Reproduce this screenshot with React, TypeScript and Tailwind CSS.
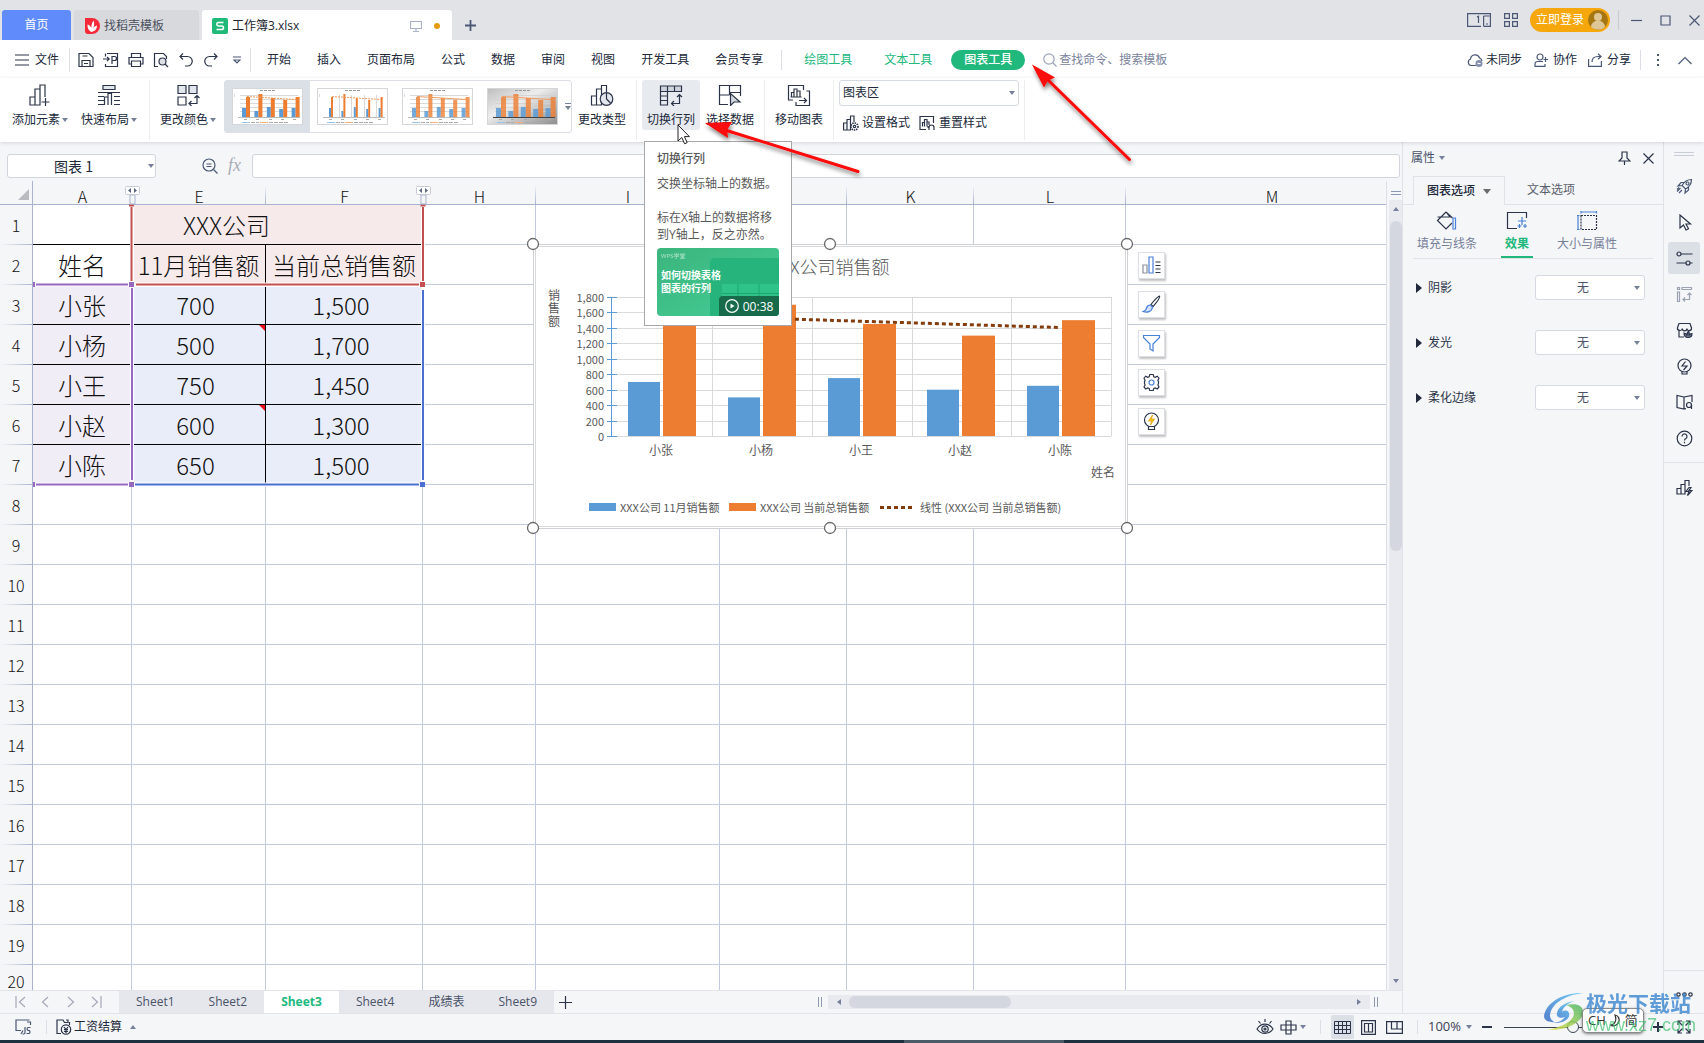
import type { ReactNode } from "react";

const INK = "#2b3448";
const SLATE = "#4a5775";

function Svg({
  w = 22,
  h = 22,
  stroke = INK,
  className = "",
  children,
}: {
  w?: number;
  h?: number;
  stroke?: string;
  className?: string;
  children: ReactNode;
}) {
  return (
    <svg
      width={w}
      height={h}
      viewBox={`0 0 ${w} ${h}`}
      fill="none"
      stroke={stroke}
      strokeWidth="1.2"
      className={`shrink-0 ${className}`}
      aria-hidden="true"
    >
      {children}
    </svg>
  );
}

function Caret({ className = "" }: { className?: string }) {
  return (
    <svg width="6" height="4" viewBox="0 0 6 4" className={`shrink-0 ${className}`} aria-hidden="true">
      <path d="M0 0h6L3 4z" fill="#76809a" />
    </svg>
  );
}

/* ---------- title bar ---------- */

function TitleBar() {
  return (
    <header className="flex h-10 shrink-0 items-end bg-[#e2e3e7] pl-0.5 text-xs">
      <button className="h-[30px] w-[69px] rounded-t-[3px] bg-[#5f8cfa] text-white">首页</button>
      <button className="ml-[3px] flex h-[30px] w-[125px] items-center rounded-t-[3px] bg-[#d8d9dc] pt-0.5 pl-2.5 text-[#4b5160]">
        <Svg w={16} h={16} stroke="none" className="mr-1">
          <path d="M1 0h7a8 8 0 0 1 0 16H4a3 3 0 0 1-3-3z" fill="#f5293a" />
          <path d="M7.500 14C4 12 3.500 9.500 3.500 6.500c2 .5 3.300 2 3.800 4C7.300 7.500 7.800 4.500 9.500 2.500c1.200 2.500.8 5.500-.6 8.300 1-1.800 2.300-2.800 4.100-3.200 0 3-1.700 5.900-5.500 6.400z" fill="#fff" />
        </Svg>
        找稻壳模板
      </button>
      <div className="ml-[3px] flex h-[30px] w-[250px] items-center rounded-t-[3px] bg-white pt-0.5 pl-2.5 text-[#20242e]">
        <Svg w={16} h={16} stroke="#fff" className="mr-1">
          <rect width="16" height="16" rx="2" fill="#1fb97a" stroke="none" />
          <path d="M11.500 4.500H6.500a1.600 1.600 0 0 0 0 3.400h3.200a1.800 1.800 0 0 1 0 3.600H4.500" strokeWidth="1.500" />
        </Svg>
        工作簿3.xlsx
        <Svg w={12} h={12} stroke="#aab2c5" className="mr-3 ml-auto">
          <path d="M.5 1.500h11v7H.5zM6 8.500v3M3 11.500h6" />
        </Svg>
        <span className="mr-3 size-1.5 rounded-full bg-[#e59b0c]" />
      </div>
      <button className="mb-2 ml-3 flex size-[13px]" aria-label="新建标签">
        <Svg w={13} h={13} stroke={SLATE}>
          <path d="M6.500 1v11M1 6.500h11" strokeWidth="1.800" />
        </Svg>
      </button>

      <div className="ml-auto flex h-10 items-center pr-1">
        <Svg w={24} h={14} stroke={SLATE} className="mr-[13px]">
          <path d="M14 13.400H.6V.6h22.800v12.800H17M10 4l1.500-.7V10M16.600 3v10.500M16.600 3h6" />
          <path d="M19 11h2" />
        </Svg>
        <Svg w={14} h={14} stroke={SLATE} className="mr-3">
          <path d="M.6.600h4.800v4.800H.6zM8.600.600h4.800v4.800H8.600zM.6 8.600h4.800v4.800H.6zM8.600 8.600h4.800v4.800H8.600z" />
        </Svg>
        <button className="flex h-6 w-20 items-center justify-between rounded-full bg-[#f6a70c] pr-0.5 pl-1.5 text-white">
          立即登录
          <Svg w={20} h={20} stroke="none">
            <circle cx="10" cy="10" r="10" fill="#a67612" />
            <circle cx="10" cy="7" r="4" fill="#dfc695" />
            <path d="M3 17a7 6.500 0 0 1 14 0 10 10 0 0 1-14 0z" fill="#dfc695" />
          </Svg>
        </button>
        <span className="mr-3 ml-2 h-5 w-px bg-[#c8cad0]" />
        <button aria-label="最小化" className="mr-[18px]">
          <Svg w={11} h={11} stroke={SLATE}>
            <path d="M0 5.500h11" />
          </Svg>
        </button>
        <button aria-label="最大化" className="mr-[18px]">
          <Svg w={11} h={11} stroke={SLATE}>
            <path d="M1 1h9v9H1z" />
          </Svg>
        </button>
        <button aria-label="关闭">
          <Svg w={11} h={11} stroke={SLATE}>
            <path d="M.5.500l10 10M10.500.500l-10 10" />
          </Svg>
        </button>
      </div>
    </header>
  );
}

/* ---------- menu row ---------- */

const quickTools: { label: string; icon: ReactNode }[] = [
  {
    label: "保存",
    icon: <path d="M1 1.500h10l4 4v9H1zM4 14.500v-6h8v6M6 11.500h4M4.500 4h5" />,
  },
  {
    label: "输出为PDF",
    icon: <path d="M4 1.500h10.500v13H2.500V12M2.500 4.500V1.500M0 7h6M4 4.800L6.200 7 4 9.200M9 12V4.500h2.500a2 2 0 0 1 0 4H9" />,
  },
  {
    label: "打印",
    icon: <path d="M3.500 5V1.500h9V5M3.500 12H1V5.500h14V12h-2.500M3.500 9h9v5.500h-9z" />,
  },
  {
    label: "打印预览",
    icon: (
      <>
        <path d="M5 14.500H1.500v-13h9l3 3V7" />
        <circle cx="9.500" cy="9.500" r="3.500" fill="#dde0e6" />
        <path d="M12 12l3 3" />
      </>
    ),
  },
  { label: "撤销", icon: <path d="M5 1.500L2 4.500l3 3M2 4.500h7.500a4.500 4.500 0 0 1 0 9.500H7" /> },
  { label: "恢复", icon: <path d="M11 1.500l3 3-3 3M14 4.500H6.500a4.500 4.500 0 0 0 0 9.500H9" /> },
];

const menus = ["开始", "插入", "页面布局", "公式", "数据", "审阅", "视图", "开发工具", "会员专享"];

function MenuRow() {
  return (
    <nav className="flex h-[38px] shrink-0 items-center bg-white pt-0.5 pl-[15px] text-xs text-[#20283a]">
      <button className="flex items-center gap-1.5">
        <Svg w={14} h={12}>
          <path d="M0 1h14M0 6h14M0 11h14" />
        </Svg>
        文件
      </button>
      <span className="mr-2 ml-2.5 h-6 w-px bg-[#dcdfe6]" />
      <div className="flex gap-[9px]">
        {quickTools.map((tool) => (
          <button key={tool.label} aria-label={tool.label}>
            <Svg w={16} h={16}>{tool.icon}</Svg>
          </button>
        ))}
      </div>
      <button className="ml-3.5" aria-label="自定义快速访问">
        <Svg w={8} h={8} stroke={SLATE}>
          <path d="M0 1h8M1 4l3 3 3-3z" />
        </Svg>
      </button>
      <span className="ml-[9px] h-6 w-px bg-[#dcdfe6]" />
      <div className="ml-4 flex gap-[26px]">
        {menus.map((m) => (
          <button key={m}>{m}</button>
        ))}
      </div>
      <span className="ml-[18px] h-5 w-px bg-[#dcdfe6]" />
      <button className="ml-[22px] text-[#20b87c]">绘图工具</button>
      <button className="ml-8 text-[#20b87c]">文本工具</button>
      <button className="ml-[19px] h-5 w-[74px] rounded-full bg-[#20b87c] font-medium text-white">图表工具</button>
      <label className="ml-[18px] flex items-center gap-0.5 text-[#7a839c]">
        <Svg w={14} h={14} stroke="#9aa3b8">
          <circle cx="6" cy="6" r="5.200" />
          <path d="M10 10l3.500 3.500" />
        </Svg>
        <input
          aria-label="查找命令"
          className="w-28 bg-transparent outline-none placeholder:text-[#7a839c]"
          placeholder="查找命令、搜索模板"
        />
      </label>

      <div className="ml-auto flex items-center pr-3">
        <button className="mr-3 flex items-center gap-[3px]">
          <Svg w={16} h={14} stroke={SLATE}>
            <path d="M9 12.500H4A3.400 3.400 0 0 1 3.500 6 4.700 4.700 0 0 1 12.600 5 3.800 3.800 0 0 1 15 8" />
            <circle cx="12" cy="10.500" r="3.500" fill="#8391af" stroke="none" />
            <path d="M10.500 10.500h3" stroke="#fff" />
          </Svg>
          未同步
        </button>
        <button className="mr-[11px] flex items-center gap-[5px]">
          <Svg w={14} h={14} stroke={SLATE}>
            <circle cx="6" cy="4" r="3" />
            <path d="M9 8.500H3.500A2.500 2.500 0 0 0 1 11v2.400h10V11M11.500 4v5M9.500 6.500H14" />
          </Svg>
          协作
        </button>
        <button className="mr-[9px] flex items-center gap-[5px]">
          <Svg w={14} h={14} stroke={SLATE}>
            <path d="M.6 6v7.400h12.800V8M4 9c0-3.500 2-5.500 6-5.500h2.500M10 .8l3 2.700-3 2.700" />
          </Svg>
          分享
        </button>
        <span className="mr-4 h-5 w-px bg-[#dcdfe6]" />
        <button aria-label="更多" className="mr-[18px]">
          <Svg w={3} h={13} stroke="none">
            <path d="M0 0h2v2H0zM0 5h2v2H0zM0 10h2v2H0z" fill={SLATE} />
          </Svg>
        </button>
        <button aria-label="收起功能区">
          <Svg w={14} h={9} stroke={SLATE}>
            <path d="M.5 8L7 1.500 13.500 8" />
          </Svg>
        </button>
      </div>
    </nav>
  );
}

/* ---------- ribbon ---------- */

function RibbonButton({ label, caret, icon }: { label: string; caret?: boolean; icon: ReactNode }) {
  return (
    <button className="flex shrink-0 flex-col items-center gap-1.5 pt-1">
      <Svg w={24} h={22}>{icon}</Svg>
      <span className="flex items-center gap-0.5 leading-4">
        {label}
        {caret && <Caret />}
      </span>
    </button>
  );
}

function RibbonLine({ className }: { className: string }) {
  return <span className={`h-[60px] w-px shrink-0 bg-[#eceef2] ${className}`} />;
}

const thumbs = [
  { bw: 4, dark: false, dashed: true, faint: false },
  { bw: 2, dark: false, dashed: true, faint: false },
  { bw: 4, dark: false, dashed: false, faint: true },
  { bw: 5, dark: true, dashed: false, faint: true },
];
const thumbData = [
  [9, 20],
  [6, 23],
  [10, 19],
  [8, 17],
  [9, 20],
];

function Thumb({ bw, dark, dashed, faint }: (typeof thumbs)[0]) {
  return (
    <svg width="71" height="37" viewBox="0 0 71 37" aria-hidden="true">
      <defs>
        <linearGradient id="thumbDark" x1="0" y1="0" x2="1" y2="1">
          <stop offset="0" stopColor="#bdbdbd" />
          <stop offset=".4" stopColor="#ededed" />
          <stop offset="1" stopColor="#8c8c8c" />
        </linearGradient>
      </defs>
      <rect x=".5" y=".5" width="70" height="36" fill={dark ? "url(#thumbDark)" : "#fff"} stroke="#d4d6da" />
      <path d="M28 2.500h16" stroke="#999" strokeDasharray="3 1" />
      {bw === 2 ? (
        <path d="M22.500 7v22M34.500 7v22M47.500 7v22M59.500 7v22M2.500 6v3" stroke="#cfcfcf" strokeWidth=".8" />
      ) : (
        <path d="M8 7.500h58M8 11.500h58M8 15.500h58M8 19.500h58M8 23.500h58M2.500 6v3" stroke="#d0d0d0" strokeWidth=".8" />
      )}
      <path d="M6 29.500h62" stroke={dark ? "#444" : "#bbb"} />
      {thumbData.map(([a, b], i) => (
        <g key={i}>
          <rect x={14 + i * 12.4 - bw} y={29 - a} width={bw} height={a} fill="#5b9bd5" opacity={faint ? 0.85 : 1} />
          <rect x={14 + i * 12.4} y={29 - b} width={bw} height={b} fill="#ed7d31" opacity={faint ? 0.8 : 1} />
        </g>
      ))}
      <path d="M15 8.500l49 3" stroke="#f09a5e" strokeDasharray={dashed ? "2 1" : "none"} />
      <path d="M12 31.500h3M24 31.500h3M37 31.500h3M49 31.500h3M61 31.500h3" stroke="#aaa" />
      <path d="M10 34.500h8" stroke="#9cc3e8" />
      <path d="M28 34.500h8" stroke="#f3b07f" />
      <path d="M19 34.500h8M37 34.500h20" stroke="#aaa" strokeDasharray="4 1" />
    </svg>
  );
}

function SwitchTooltip() {
  return (
    <div
      id="switch-tip"
      role="tooltip"
      className="absolute top-[61px] left-[2px] z-30 w-[148px] border border-[#a8a8a8] bg-white px-3 pt-2 pb-[9px] text-left text-xs leading-[17px] text-[#595959]"
    >
      <p className="font-medium">切换行列</p>
      <p className="mt-2">交换坐标轴上的数据。</p>
      <p className="mt-[17px]">标在X轴上的数据将移到Y轴上，反之亦然。</p>
      <div className="relative mt-[5px] h-[68px] overflow-hidden rounded-[4px] bg-linear-to-br from-[#3bb57d] to-[#45cd97] px-1 pt-1 text-white">
        <svg width="69" height="58" viewBox="0 0 69 58" fill="none" className="absolute right-0 bottom-0" aria-hidden="true">
          <path d="M0 58V5a5 5 0 0 1 5-5h64v58z" fill="#27b47c" />
          <path d="M12 26h57v32H12z" fill="#2fc389" />
          <path d="M12 35.500h57M28 26v32M49 26v32" stroke="#1da66c" />
        </svg>
        <p className="relative text-[6px] leading-2 opacity-60">WPS学堂</p>
        <p className="relative mt-[9px] text-[10px] leading-[13px] font-bold">
          如何切换表格
          <br />
          图表的行列
        </p>
        <span className="absolute right-0 bottom-0 flex h-5 w-[60px] items-center justify-center gap-1 rounded-tl-[4px] bg-[#176b4b]">
          <Svg w={14} h={14} stroke="#fff">
            <circle cx="7" cy="7" r="6.300" />
            <path d="M5.500 4.500v5l4-2.500z" fill="#fff" stroke="none" />
          </Svg>
          00:38
        </span>
      </div>
    </div>
  );
}

function Ribbon() {
  return (
    <section className="relative z-20 flex h-16 shrink-0 bg-white pt-0.5 pl-3 text-xs text-[#20283a] shadow-[0_1px_4px_rgba(40,50,70,0.16)]">
      <RibbonButton
        label="添加元素"
        caret
        icon={<path d="M2 21V13h5v8zM7 13V5h5v16H7M12 5V1h5v12M12 20.500V16M17.500 14v8M13.500 18h8" />}
      />
      <span className="w-[13px]" />
      <RibbonButton
        label="快速布局"
        caret
        icon={
          <>
            <path d="M6 1.500h12v4H6z" fill="#e3e6ec" />
            <path d="M1 8.500h22M1 12.500h6M1 16.500h6M1 20.500h6M17 12.500h6M17 16.500h6M17 20.500h6M7.500 21v-8h3.500v8M11 21V9.500h3.500V21" />
          </>
        }
      />
      <RibbonLine className="mr-2.5 ml-3" />
      <RibbonButton
        label="更改颜色"
        caret
        icon={
          <>
            <path d="M2 1.500h8v8H2zM13 1.500h8v8h-8z" fill="#e3e6ec" />
            <path d="M2 13h8v8H2zM21 12v7.500h-8M15.500 17L13 19.500l2.500 2.500M18.500 14L21 11.500l2.500 2.500" />
          </>
        }
      />
      <div className="ml-2 flex h-[53px] w-[348px] shrink-0 rounded-[3px] border border-[#dcdfe6]">
        {thumbs.map((t, i) => (
          <button
            key={i}
            aria-label={`图表样式 ${i + 1}`}
            className={`flex w-[85px] shrink-0 items-center pl-[7px] ${i === 0 ? "bg-[#dbe0e6]" : ""}`}
          >
            <Thumb {...t} />
          </button>
        ))}
        <button aria-label="更多样式" className="flex min-w-0 flex-1 items-center justify-center">
          <Svg w={6} h={8} stroke="none">
            <path d="M0 0h6v1H0zM0 3h6L3 7z" fill="#76809a" />
          </Svg>
        </button>
      </div>
      <span className="w-1.5" />
      <RibbonButton
        label="更改类型"
        icon={
          <>
            <path d="M1.500 21v-9h5v9zM6.500 12V5h5v16h-5M11.500 6V1.500h5V8" />
            <circle cx="16.500" cy="15" r="6.300" fill="#e3e6ec" />
            <path d="M16.500 9v6l4 4" />
          </>
        }
      />
      <RibbonLine className="mr-[5px] ml-2.5" />
      <div className="relative">
        <button
          aria-describedby="switch-tip"
          className="flex h-[50px] w-[58px] flex-col items-center gap-1.5 rounded-[3px] bg-[#e7eaef] pt-1"
        >
          <Svg w={24} h={22}>
            <path d="M1.500 2h21v5.500h-21z" fill="#cfd4dc" />
            <path d="M1.500 7.500V21h7V2M15.500 2v5.500M1.500 12h7M1.500 16.500h7M20.500 11v8.500h-8M15 17l-2.500 2.500L15 22M18 13l2.500-2.500L23 13" />
          </Svg>
          <span className="leading-4">切换行列</span>
        </button>
        <SwitchTooltip />
      </div>
      <span className="w-1.5" />
      <RibbonButton
        label="选择数据"
        icon={
          <>
            <path d="M10 20.500H1.500v-19h21V12M1.500 11h10M11.500 1.500V11M11.500 8.500h11" />
            <path d="M12.500 9.500v12l3.500-3.500h6z" fill="#d5d9e1" />
          </>
        }
      />
      <RibbonLine className="mr-2.5 ml-2.5" />
      <RibbonButton
        label="移动图表"
        icon={
          <path d="M6 16H1.500V1.500h15V6M19.500 7h3v14.500H9V18M4.500 13V8.500h2.500V13M7 13V5h3v8M10 13V7h3v6M3.500 13h11M12 16.500h7M17 14l2.500 2.500L17 19" />
        }
      />
      <RibbonLine className="mr-[5px] ml-2.5" />
      <div className="w-[180px] shrink-0">
        <div className="relative">
          <select
            aria-label="图表元素"
            className="h-[26px] w-full appearance-none rounded-[3px] border border-[#d5d9e1] bg-white pl-[3px] outline-none"
          >
            <option>图表区</option>
          </select>
          <Caret className="absolute top-[11px] right-1" />
        </div>
        <div className="mt-[9px] flex items-center gap-[9px] pl-1 leading-4">
          <button className="flex items-center gap-[3px]">
            <Svg w={16} h={16}>
              <path d="M.6 15V8H4v7zM4 8V4.500h3.500V15H4M7.500 4.500V1H11v6" />
              <circle cx="11.500" cy="11.500" r="3.500" strokeDasharray="1.500 .8" strokeWidth="1.600" />
              <circle cx="11.500" cy="11.500" r="1.200" />
            </Svg>
            设置格式
          </button>
          <button className="flex items-center gap-1">
            <Svg w={16} h={16}>
              <path d="M7 14.500H1V1.500h13.500V8M3.500 11.500V7.500h2v4M5.500 11.500v-7h2.500v7M8 7h2v3M10 15v-2.500a2.500 2.500 0 0 1 5 0V15M8.500 11.500L10 13" />
            </Svg>
            重置样式
          </button>
        </div>
      </div>
      <RibbonLine className="ml-[5px]" />
    </section>
  );
}

/* ---------- spreadsheet ---------- */

const columns = [
  { name: "A", width: "w-[99px]" },
  { name: "E", width: "w-[134px]" },
  { name: "F", width: "w-[157px]" },
  { name: "H", width: "w-[113px]" },
  { name: "I", width: "w-[184px]" },
  { name: "J", width: "w-[127px]" },
  { name: "K", width: "w-[127px]" },
  { name: "L", width: "w-[152px]" },
  { name: "M", width: "w-[292px]" },
];

const people = [
  { name: "小张", month: 700, total: "1,500", note: false },
  { name: "小杨", month: 500, total: "1,700", note: true },
  { name: "小王", month: 750, total: "1,450", note: false },
  { name: "小赵", month: 600, total: "1,300", note: true },
  { name: "小陈", month: 650, total: "1,500", note: false },
];

const LAST_ROW = 20;
const GRID = "border-r border-b border-[#c3cadf]";
const INKED = "border-b border-b-black";

function RowHead({ n }: { n: number }) {
  return (
    <th
      scope="row"
      className={`border-r border-[#a9b3cf] bg-[#f5f6f8] bg-[linear-gradient(to_right,transparent,#a9b3cf)] bg-[length:100%_1px] bg-bottom bg-no-repeat p-0 text-base leading-4 font-light ${
        n === LAST_ROW ? "h-8" : "h-10"
      }`}
    >
      {n}
    </th>
  );
}

function EmptyCells({ count }: { count: number }) {
  return (
    <>
      {Array.from({ length: count }, (_, i) => (
        <td key={i} className={GRID} />
      ))}
    </>
  );
}

function Sheet() {
  return (
    <table className="w-[1418px] min-w-full table-fixed border-separate border-spacing-0 bg-white text-center text-base text-[#111] [font-family:'Noto_Sans_CJK_SC',sans-serif]">
      <colgroup>
        <col className="w-[33px]" />
        {columns.map((c) => (
          <col key={c.name} className={c.width} />
        ))}
      </colgroup>
      <thead>
        <tr>
          <th className="h-6 border-r border-b border-[#a9b3cf] bg-[#f5f6f8] p-0">
            <svg width="11" height="11" viewBox="0 0 11 11" className="mt-1 mr-[3px] ml-auto" aria-hidden="true">
              <path d="M11 0v11H0z" fill="#b9bbc0" />
            </svg>
          </th>
          {columns.map((c) => (
            <th
              key={c.name}
              scope="col"
              className="h-6 border-b border-[#a9b3cf] bg-[#f5f6f8] bg-[linear-gradient(to_bottom,transparent,#a9b3cf)] bg-[length:1px_19px] bg-right-bottom bg-no-repeat p-0 align-bottom leading-4 font-light"
            >
              {c.name}
            </th>
          ))}
        </tr>
      </thead>
      <tbody>
        <tr>
          <RowHead n={1} />
          <td className={`border-r border-[#c3cadf] ${INKED}`} />
          <td
            colSpan={2}
            className={`border-r border-[#c3cadf] bg-[#f7eaea] p-0 pl-[51px] text-left text-2xl font-light ${INKED}`}
          >
            XXX公司
          </td>
          <EmptyCells count={6} />
        </tr>
        <tr className="text-2xl leading-8 whitespace-nowrap">
          <RowHead n={2} />
          <td className={`border-r border-[#c3cadf] p-0 font-light ${INKED}`}>姓名</td>
          <td className={`border-r border-r-black bg-[#f7eaea] p-0 font-light ${INKED}`}>11月销售额</td>
          <td className={`border-r border-[#c3cadf] bg-[#f7eaea] p-0 font-light ${INKED}`}>当前总销售额</td>
          <EmptyCells count={6} />
        </tr>
        {people.map((p, i) => (
          <tr key={p.name}>
            <RowHead n={i + 3} />
            <td className={`border-r border-[#c3cadf] bg-[#f1edf7] p-0 text-2xl font-light ${INKED}`}>{p.name}</td>
            <td className={`relative border-r border-r-black bg-[#e9edf9] p-0 pr-1.5 text-2xl font-light ${INKED}`}>
              {p.month}
              {p.note && (
                <svg width="6" height="6" viewBox="0 0 6 6" className="absolute top-0 right-0" aria-hidden="true">
                  <path d="M0 0h6v6z" fill="#f0101c" />
                </svg>
              )}
            </td>
            <td className={`border-r border-[#c3cadf] bg-[#e9edf9] p-0 pr-1.5 text-2xl font-light ${INKED}`}>{p.total}</td>
            <EmptyCells count={6} />
          </tr>
        ))}
        {Array.from({ length: LAST_ROW - 7 }, (_, i) => (
          <tr key={i}>
            <RowHead n={i + 8} />
            <EmptyCells count={9} />
          </tr>
        ))}
      </tbody>
    </table>
  );
}

// coloured outlines of the ranges that feed the chart
function RangeOutlines() {
  return (
    <svg width="440" height="310" viewBox="0 185 440 310" fill="none" className="absolute top-1 left-0" aria-hidden="true">
      <g stroke="#fff" strokeWidth="4">
        <path d="M132 205v80h291v-80M34 284.500h98v200H34M132 284.500h291v200H132" />
      </g>
      <g strokeWidth="2">
        <path d="M423 290v190M135 484.500h284" stroke="#4a6fd0" />
        <path d="M131.500 207v74M423 207v74M136 284.500h283" stroke="#c1504f" />
        <path d="M36 284.500h92M132 288v192M36 484.500h92" stroke="#9668c0" />
      </g>
      <path d="M129 204.500h5v2h-5zM420.500 204.500h5v2h-5zM420 282h5v5h-5z" fill="#c1504f" />
      <path d="M129 282h5v5h-5zM129 482h5v5h-5zM33 282h2v5h-2zM33 482h2v5h-2z" fill="#9668c0" />
      <path d="M420 482h5v5h-5z" fill="#4a6fd0" />
    </svg>
  );
}

function HiddenColumns({ className }: { className: string }) {
  return (
    <svg width="15" height="20" viewBox="0 0 15 20" className={`absolute top-1 ${className}`} aria-hidden="true">
      <path d="M5 10v9h5v-9z" fill="#f5f6f8" stroke="#a9b3cf" />
      <rect x=".5" y="1.500" width="14" height="8" rx="1" fill="#fff" stroke="#c8ccd6" />
      <path d="M6 3v5L3 5.500zM9 3v5l3-2.500z" fill="#5b6782" />
    </svg>
  );
}

/* ---------- chart ---------- */

const PLOT = { left: 612, right: 1111, top: 297, bottom: 436 };
const barY = (v: number) => PLOT.bottom - (v * (PLOT.bottom - PLOT.top)) / 1800;
const slot = (PLOT.right - PLOT.left) / 5;
const ticks = Array.from({ length: 10 }, (_, i) => i * 200);

function Chart() {
  return (
    <svg
      width="612"
      height="304"
      viewBox="525 235 612 304"
      className="absolute top-[54px] left-[525px] [font-family:'Noto_Sans_CJK_SC',sans-serif]"
      fontSize="12"
      fill="#595959"
      role="img"
      aria-label="XXX公司销售额"
    >
      <rect x="533.500" y="244.500" width="594" height="284" fill="#fff" stroke="#cfd1d6" />
      <rect x="535.500" y="246.500" width="590" height="280" fill="#fff" stroke="#d9d9d9" />
      <text x="830" y="274" fontSize="18" textAnchor="middle" fontWeight="300">XXX公司销售额</text>
      {["销", "售", "额"].map((c, i) => (
        <text key={c} x="548" y={300 + i * 13}>{c}</text>
      ))}
      {ticks.map((t) => (
        <g key={t}>
          <path d={`M${PLOT.left} ${Math.round(barY(t)) + 0.5}H${PLOT.right}`} stroke="#d9d9d9" />
          <path d={`M607 ${Math.round(barY(t)) + 0.5}h10`} stroke="#5b9bd5" />
          <text x="604" y={Math.round(barY(t)) + 5} fontSize="11" textAnchor="end">
            {t.toLocaleString("en-US")}
          </text>
        </g>
      ))}
      {people.map((p, i) => {
        const x = Math.round(PLOT.left + i * slot);
        const total = Number(p.total.replace(",", ""));
        return (
          <g key={p.name}>
            <path d={`M${Math.round(x + slot)}.5 ${PLOT.top}V${PLOT.bottom}`} stroke="#d9d9d9" />
            <rect x={x + 16} y={barY(p.month)} width="32" height={PLOT.bottom - barY(p.month)} fill="#5b9bd5" />
            <rect x={x + 51} y={barY(total)} width="33" height={PLOT.bottom - barY(total)} fill="#ed7d31" />
            <text x={x + 49} y="455" textAnchor="middle">{p.name}</text>
          </g>
        );
      })}
      <path d={`M611.500 ${PLOT.top}V${PLOT.bottom}`} stroke="#5b9bd5" />
      <path d="M662 315l397 12.500" stroke="#843c0c" strokeWidth="3" strokeDasharray="4 3" />
      <text x="1091" y="477">姓名</text>
      <rect x="589" y="503" width="27" height="8" fill="#5b9bd5" />
      <text x="620" y="512" fontSize="11">XXX公司 11月销售额</text>
      <rect x="729" y="503" width="27" height="8" fill="#ed7d31" />
      <text x="760" y="512" fontSize="11">XXX公司 当前总销售额</text>
      <path d="M880 507.500h35" stroke="#843c0c" strokeWidth="3" strokeDasharray="4 3" />
      <text x="920" y="512" fontSize="11">线性 (XXX公司 当前总销售额)</text>
      {[533, 830, 1127].map((x) =>
        [244, 528].map((y) => (
          <circle key={`${x}-${y}`} cx={x} cy={y} r="5.500" fill="#fff" stroke="#6b6b6b" strokeWidth="1.300" />
        )),
      )}
    </svg>
  );
}

const chartTools: { label: string; icon: ReactNode }[] = [
  {
    label: "图表元素",
    icon: (
      <>
        <path d="M1 9h4v8H1z" stroke="#8a8f9c" />
        <path d="M7 1h4v16H7z" stroke="#4a80d8" />
        <path d="M13.500 6h5M13.500 9.500h5M13.500 13h5M13.500 16.500h5" />
      </>
    ),
  },
  {
    label: "图表样式",
    icon: (
      <>
        <path d="M17.500 1c-1 0-6 5-8.500 8.500l2 2C14 8 18.500 3 17.500 1z" />
        <path d="M8.500 10c-2 0-3.500 1-4 3-.3 1.600-1.500 3-3.500 3.500 4 1.300 9 .5 9.500-4.500z" fill="#cfe0f8" stroke="#4a80d8" />
      </>
    ),
  },
  {
    label: "图表筛选器",
    icon: <path d="M1.500 1.500h16v2L11 10v7l-3-2v-5L1.500 3.500z" stroke="#4a80d8" />,
  },
  {
    label: "设置图表区域格式",
    icon: (
      <>
        <path d="M7.800 1.500h3.400l.6 2.200 1.500.6 2-1.100 1.700 2-1.100 2 .6 1.500v1.800l-.6 1.500 1.100 2-1.700 2-2-1.100-1.500.6-.6 2H7.800l-.6-2-1.500-.6-2 1.100-1.700-2 1.100-2-.6-1.500V8.700l.6-1.500-1.100-2 1.700-2 2 1.100 1.500-.6z" />
        <circle cx="9.500" cy="9.500" r="2.500" stroke="#4a80d8" />
      </>
    ),
  },
  {
    label: "智能推荐",
    icon: (
      <>
        <circle cx="9.500" cy="8" r="7" />
        <path d="M6.500 14.500h6v3h-6z" fill="#fff" />
        <path d="M10.500 3L6.500 9h3l-1 4 4-6h-3z" fill="#f8c21c" stroke="#e5a20c" strokeWidth=".8" />
      </>
    ),
  },
];

function ChartTools() {
  return (
    <div className="absolute top-[71px] left-[1138px] flex flex-col gap-3">
      {chartTools.map((t) => (
        <button
          key={t.label}
          aria-label={t.label}
          className="flex size-[27px] items-center justify-center border border-[#dcdfe6] bg-white shadow-[1px_2px_2px_rgba(0,0,0,0.25)]"
        >
          <Svg w={19} h={19}>{t.icon}</Svg>
        </button>
      ))}
    </div>
  );
}

function FormulaBar() {
  return (
    <div className="flex h-[39px] items-start pt-3 pr-0.5 pl-[7px]">
      <div className="relative">
        <input
          aria-label="名称框"
          defaultValue="图表 1"
          className="h-6 w-[149px] rounded-[3px] border border-[#d2d5dc] bg-white pr-4 text-center text-sm text-[#20283a] outline-none [font-family:'Noto_Sans_CJK_SC',sans-serif]"
        />
        <Caret className="absolute top-2.5 right-0.5" />
      </div>
      <button aria-label="浏览公式结果" className="mt-1 ml-[46px]">
        <Svg w={16} h={16} stroke={SLATE}>
          <circle cx="7" cy="7" r="6" />
          <path d="M11.500 11.500l4 4M4.500 6h5M4.500 8.500h5" />
        </Svg>
      </button>
      <span className="ml-2.5 w-6 text-lg leading-[22px] text-[#a9adb6] italic [font-family:'Liberation_Serif',serif]">fx</span>
      <input aria-label="编辑栏" className="h-6 min-w-0 flex-1 rounded-[3px] border border-[#d2d5dc] bg-white px-2 outline-none" />
    </div>
  );
}

function VerticalScroll() {
  return (
    <div className="flex w-4 shrink-0 flex-col border-l border-[#dcdfe8] pt-1 pl-0.5">
      <div className="flex h-[15px] flex-col items-center justify-center gap-0.5">
        <span className="h-px w-2.5 bg-[#8d98b3]" />
        <span className="h-px w-2.5 bg-[#8d98b3]" />
      </div>
      <div className="flex flex-1 flex-col items-center bg-[#e9eaef] py-[7px]">
        <Caret className="rotate-180" />
        <span className="mt-2.5 h-[330px] w-3 rounded-full bg-[#d4d7df]" />
        <Caret className="mt-auto" />
      </div>
    </div>
  );
}

const sheetTabs = ["Sheet1", "Sheet2", "Sheet3", "Sheet4", "成绩表", "Sheet9"];

const sheetArrows = [
  { label: "第一张", d: "M1 0v12M10 1L4.500 6l5.500 5" },
  { label: "上一张", d: "M8 1L2.500 6 8 11" },
  { label: "下一张", d: "M2 1l5.500 5L2 11" },
  { label: "最后一张", d: "M1 1l5.500 5L1 11M10 0v12" },
];

function SheetTabs() {
  return (
    <div className="flex h-[23px] shrink-0 items-center border-t border-[#e2e4ea] text-xs text-[#4a5368]">
      <div className="flex w-[119px] shrink-0 items-center justify-between pr-[17px] pl-[15px]">
        {sheetArrows.map((a) => (
          <button key={a.label} aria-label={a.label}>
            <Svg w={11} h={12} stroke="#a3a9b7">
              <path d={a.d} />
            </Svg>
          </button>
        ))}
      </div>
      {sheetTabs.map((s) => (
        <button
          key={s}
          className={`h-full shrink-0 px-[17px] ${s === "Sheet3" ? "bg-white font-bold text-[#20b87c]" : "bg-[#e6e7ec]"}`}
        >
          {s}
        </button>
      ))}
      <button aria-label="新建工作表" className="ml-[5px]">
        <Svg w={13} h={13}>
          <path d="M6.500 0v13M0 6.500h13" />
        </Svg>
      </button>
      <div className="ml-auto flex w-[584px] items-center pr-6">
        <span className="mr-1.5 h-2.5 w-1 border-x border-[#8d98b3]" />
        <div className="flex h-3.5 flex-1 items-center bg-[#e9eaef] px-2">
          <Caret className="rotate-90" />
          <span className="ml-[7px] h-3 w-[162px] rounded-full bg-[#d4d7df]" />
          <Caret className="ml-auto -rotate-90" />
        </div>
        <span className="ml-1 h-2.5 w-1 border-x border-[#8d98b3]" />
      </div>
    </div>
  );
}

/* ---------- property panel ---------- */

const effects = ["阴影", "发光", "柔化边缘"];

function PropertyPanel() {
  return (
    <aside className="w-[262px] shrink-0 border-x border-[#e0e2e8] pt-2 text-xs text-[#2b3448]">
      <div className="flex h-4 items-center pr-[9px] pl-2">
        <button className="flex items-center gap-1 text-[#4a5368]">
          属性
          <Caret />
        </button>
        <button aria-label="固定" className="mr-3 ml-auto">
          <Svg w={13} h={14}>
            <path d="M4 1h5v6l3 3H1l3-3zM6.500 10v4" />
          </Svg>
        </button>
        <button aria-label="关闭面板">
          <Svg w={11} h={11}>
            <path d="M.5.500l10 10M10.500.500l-10 10" />
          </Svg>
        </button>
      </div>

      <div className="mt-2.5 flex h-[29px]">
        <span className="w-2.5 border-b border-[#e0e2e8]" />
        <button className="flex w-[92px] items-center justify-center gap-2 border border-b-0 border-[#e0e2e8] font-medium text-[#20283a]">
          图表选项
          <svg width="8" height="5" viewBox="0 0 8 5" aria-hidden="true">
            <path d="M0 0h8L4 5z" fill="#6b6b6b" />
          </svg>
        </button>
        <button className="flex-1 border-b border-[#e0e2e8] pl-[22px] text-left text-[#5a5f6c]">文本选项</button>
      </div>

      <div className="mx-2.5 flex h-[54px] justify-between border-b border-[#e0e2e8] pr-9 pl-1 text-[#76809a]">
        <button className="flex flex-col items-center gap-[5px] pt-1.5">
          <Svg w={22} h={20}>
            <path d="M10 1L1.500 9.500 10 18l6-6M1.500 6H14L10 1l6.500 6" />
            <path d="M17 7v11h2.500V7z" stroke="#4a80d8" />
          </Svg>
          <span className="leading-4">填充与线条</span>
        </button>
        <button className="flex w-8 flex-col items-center gap-[5px] border-b-2 border-[#20b87c] pt-1.5 font-bold text-[#20b87c]">
          <Svg w={22} h={20}>
            <path d="M11 17.500H1.500v-16h19V7" />
            <path d="M16 6v8M12 10h8M13.500 13v4M11.500 15h4M19 13v4M17 15h4" stroke="#4a80d8" />
          </Svg>
          <span className="leading-4">效果</span>
        </button>
        <button className="flex flex-col items-center gap-[5px] pt-1.5">
          <Svg w={22} h={20}>
            <path d="M5 4.500h15.500v14H5z" strokeDasharray="2 1" />
            <path d="M5 1h15.500M5 0v2.500M20.500 0v2.500M2 4.500v14M1 4.500h2.500M1 18.500h2.500" stroke="#4a80d8" />
          </Svg>
          <span className="leading-4">大小与属性</span>
        </button>
      </div>

      <div className="flex flex-col gap-[30px] pt-4 pr-[18px] pl-[13px]">
        {effects.map((e) => (
          <label key={e} className="flex h-[25px] items-center">
            <svg width="6" height="10" viewBox="0 0 6 10" className="mr-1.5" aria-hidden="true">
              <path d="M0 0l6 5-6 5z" fill="#20283a" />
            </svg>
            {e}
            <span className="relative ml-auto">
              <select className="h-[25px] w-[110px] appearance-none rounded-[3px] border border-[#d5d9e1] bg-white pr-3.5 text-center text-[#4a5368] outline-none [text-align-last:center]">
                <option>无</option>
              </select>
              <Caret className="absolute top-[11px] right-[5px]" />
            </span>
          </label>
        ))}
      </div>
    </aside>
  );
}

const sideTools: { label: string; on?: boolean; stroke?: string; icon: ReactNode }[] = [
  {
    label: "快捷",
    stroke: SLATE,
    icon: (
      <>
        <path d="M15.500 1.500C11 1.500 8 4 6 7.500L9.500 11C13 9 15.500 6 15.500 1.500zM6 7.500L2 8l3-3.500h3M9.500 11L9 15l3.500-3V9M4.500 10L1 13.500M6 12l-3 3M3 9.500L1 11.500" />
        <circle cx="11.500" cy="5.500" r="1.500" />
      </>
    ),
  },
  { label: "选择", icon: <path d="M4 1v13l3.500-3 2.500 5 2.500-1.300L10 10h4.500z" /> },
  {
    label: "属性",
    on: true,
    icon: (
      <>
        <circle cx="3" cy="4" r="2" />
        <circle cx="12" cy="13" r="2" />
        <path d="M5 4h11.500M.5 13H10M14 13h2.500" />
      </>
    ),
  },
  {
    label: "透视表",
    stroke: "#9ba2b2",
    icon: <path d="M1.500 1.500h2v2h-2zM6 1.500h9.500v2H6zM1.500 6h2v9.500h-2zM13.500 7v6.500H7M9 11.500l-2 2 2 2M11.500 9l2-2 2 2" />,
  },
  {
    label: "模板",
    icon: (
      <>
        <path d="M8 15H3V8.500M1.500 5.500L3 1.500h11L15.500 6a2.200 2.200 0 0 1-4.600.5 2.200 2.200 0 0 1-4.600 0A2.300 2.300 0 0 1 1.500 5.500z" />
        <path d="M12 15.500c-3 0-4-2-4-4.500 1.500.3 2.500 1 3 2.500 0-2 .5-3.500 1.500-4.500.8 1.300 1 3 .5 4.500.6-1.300 1.500-2 3-2 0 2.500-1.500 4-4 4z" fill="#6b7389" />
      </>
    ),
  },
  {
    label: "智能",
    icon: (
      <>
        <circle cx="8.500" cy="7.500" r="6.500" />
        <path d="M6 13.500V16h5v-2.500M9.500 3.500L6 8h5l-3.500 4" />
      </>
    ),
  },
  {
    label: "查询",
    icon: (
      <>
        <path d="M8 3L1 1.500v12L8 15zM8 3l8-1.500V8M8 15l2-.3" />
        <circle cx="13" cy="11" r="2.500" />
        <path d="M15.500 10.500V15" />
      </>
    ),
  },
  {
    label: "帮助",
    icon: (
      <>
        <circle cx="8.500" cy="8.500" r="7.300" />
        <path d="M6 6.500a2.500 2.500 0 1 1 3.800 2.100c-.9.500-1.300 1-1.300 2M8.500 11.800v1.400" />
      </>
    ),
  },
];

function SideBar() {
  return (
    <aside className="flex w-10 shrink-0 flex-col items-center pt-2.5">
      <span className="h-1 w-5 border-y border-[#c8ccd6]" />
      <div className="mt-3.5 flex flex-col gap-1">
        {sideTools.map((t) => (
          <button
            key={t.label}
            aria-label={t.label}
            className={`flex size-8 items-center justify-center rounded-[3px] ${t.on ? "bg-[#dbdfe6]" : ""}`}
          >
            <Svg w={17} h={17} stroke={t.stroke}>{t.icon}</Svg>
          </button>
        ))}
      </div>
      <span className="mt-2 h-px w-full bg-[#e0e2e8]" />
      <button aria-label="智能图表" className="mt-4">
        <Svg w={17} h={17}>
          <path d="M1 15V9.500h4V15zM5 9.500v-4h4V15H5M9 5.500v-4h4V7M13 8.500l-3 4h3l-1.500 4 4.500-5h-3l2-3z" />
        </Svg>
      </button>
      <span className="mt-auto h-px w-full bg-[#e0e2e8]" />
      <button aria-label="更多工具" className="mt-[21px] mb-4">
        <Svg w={17} h={5}>
          <circle cx="2.500" cy="2.500" r="1.700" />
          <circle cx="8.500" cy="2.500" r="1.700" />
          <circle cx="14.500" cy="2.500" r="1.700" />
        </Svg>
      </button>
    </aside>
  );
}

/* ---------- status bar ---------- */

function StatusBar() {
  return (
    <footer className="flex h-[27px] shrink-0 items-center border-t border-[#e2e4ea] pr-[13px] pl-[15px] text-xs text-[#20283a]">
      <Svg w={17} h={16} stroke={SLATE}>
        <path d="M6 11.500H1V1h13.500M8 11.500L6 15M10 8v5.500c0 1-.5 1.500-1.500 1.500H7.500M15.500 8.500h-2c-2 0-2 2.800 0 2.800s2 3.200 0 3.200h-2M12 3h3.500v3" />
      </Svg>
      <span className="mr-[9px] ml-3.5 h-3.5 w-px bg-[#dcdfe6]" />
      <button className="flex items-center gap-0.5">
        <Svg w={16} h={16}>
          <path d="M5 14.500H1V1h6l1.500 2.500H12V1h-2M13.500 3v3" />
          <circle cx="10" cy="10.500" r="4.700" />
          <path d="M8 8l2 2.500L12 8M10 10.500V14M8 10.500h4M8 12.300h4" />
        </Svg>
        工资结算
        <Caret className="ml-1.5 rotate-180" />
      </button>

      <Svg w={18} h={16} className="ml-auto">
        <path d="M1 10c4-6.500 12-6.500 16 0-4 6-12 6-16 0zM9 0v3M2.500 2l2 2.500M15.500 2l-2 2.500" />
        <circle cx="9" cy="10" r="3.200" />
        <circle cx="9" cy="10" r="1" />
      </Svg>
      <Svg w={17} h={15} className="ml-1.5">
        <path d="M6 1h5v13H6zM1 5h15v5H1z" />
      </Svg>
      <Caret className="ml-[3px]" />
      <span className="mr-2.5 ml-3.5 h-3.5 w-px bg-[#dcdfe6]" />
      <button aria-label="普通视图" className="flex h-6 w-[23px] items-center justify-center rounded-[2px] bg-[#dbdfe6]">
        <Svg w={17} h={13}>
          <path d="M.5.500h16v12H.5zM.5 4.500h16M.5 8.500h16M4.500 0v13M8.500 0v13M12.500 0v13" strokeWidth="1" />
        </Svg>
      </button>
      <button aria-label="页面布局视图" className="ml-[7px]">
        <Svg w={15} h={15}>
          <path d="M.6.600h13.800v13.800H.6zM3.500 3.500h8v8.500h-8zM7.500 3.500V12" />
        </Svg>
      </button>
      <button aria-label="分页预览" className="ml-[10px]">
        <Svg w={17} h={13}>
          <path d="M.6.600h15.800v11.800H.6zM5.500.600V8h5.500V.600M11 8h5.400" />
        </Svg>
      </button>
      <span className="mr-2.5 ml-3.5 h-3.5 w-px bg-[#dcdfe6]" />
      <button className="flex items-center gap-[5px] text-[13px] text-[#3a4356]">
        100%
        <Caret />
      </button>
      <button aria-label="缩小" className="ml-2.5">
        <Svg w={10} h={10}>
          <path d="M0 5h10" strokeWidth="2" />
        </Svg>
      </button>
      <input
        type="range"
        aria-label="显示比例"
        defaultValue={50}
        className="ml-3 h-3 w-[138px] appearance-none bg-[linear-gradient(#3a4356,#3a4356)] bg-[length:100%_1px] bg-center bg-no-repeat [&::-webkit-slider-thumb]:size-3 [&::-webkit-slider-thumb]:appearance-none [&::-webkit-slider-thumb]:rounded-full [&::-webkit-slider-thumb]:border [&::-webkit-slider-thumb]:border-[#3a4356] [&::-webkit-slider-thumb]:bg-[#f5f6f8]"
      />
      <button aria-label="放大" className="ml-[11px]">
        <Svg w={10} h={10}>
          <path d="M0 5h10M5 0v10" strokeWidth="2" />
        </Svg>
      </button>
      <button aria-label="全屏" className="ml-3.5">
        <Svg w={14} h={14}>
          <path d="M1 5V1h4M9 1h4v4M13 9v4H9M5 13H1V9M1 1l4.500 4.500M13 1L8.500 5.500M13 13L8.500 8.500M1 13l4.500-4.500" />
        </Svg>
      </button>
    </footer>
  );
}

/* ---------- things lying over the window ---------- */

function Pointers() {
  return (
    <svg
      width="500"
      height="130"
      viewBox="670 50 500 130"
      className="pointer-events-none absolute top-[50px] left-[670px] z-40"
      aria-hidden="true"
    >
      <defs>
        <filter id="soft" x="-10%" y="-10%" width="120%" height="130%">
          <feDropShadow dx="1" dy="3" stdDeviation="2" floodColor="#000" floodOpacity=".5" />
        </filter>
      </defs>
      <g filter="url(#soft)" fill="#fb0707" stroke="#fb0707" strokeLinecap="round">
        <path d="M725 130l133 41.500" strokeWidth="3" />
        <path d="M705 123l27-1-5 8 1 8z" stroke="none" />
        <path d="M1048 80l81.500 79.500" strokeWidth="3" />
        <path d="M1032 64.500l23 13-7 3-4 7z" stroke="none" />
      </g>
      <path d="M678 125v16l3.800-3.500 2.800 6.300 2.600-1.200-2.800-6h5z" fill="#fff" stroke="#222" strokeWidth="1" />
    </svg>
  );
}

function SiteMark() {
  return (
    <div className="pointer-events-none absolute right-2 bottom-[7px] z-40 flex items-start">
      <svg width="44" height="44" viewBox="0 0 44 44" className="opacity-85" aria-hidden="true">
        <defs>
          <linearGradient id="markBlue" x1="1" y1="0" x2="0" y2="1">
            <stop offset="0" stopColor="#59c7f5" />
            <stop offset="1" stopColor="#3a6bc4" />
          </linearGradient>
          <linearGradient id="markGreen" x1="1" y1="0" x2="0" y2="1">
            <stop offset="0" stopColor="#4cb86a" />
            <stop offset="1" stopColor="#e6e04a" />
          </linearGradient>
        </defs>
        <path d="M42 3C22 2 4 12 2 26c0 5 5 6 10 6-4-3-5-6-3-11C13 11 28 4 42 3z" fill="url(#markBlue)" />
        <path d="M33 11c-10 1-17 6-18 12-1 4 3 6 8 4-4 5-8 6-15 5 12 3 21-3 19-9-1-3-5-3-7-1 1-5 6-9 13-11z" fill="url(#markBlue)" />
        <path d="M24 15c10-2 17 0 17 7 0 10-16 19-36 18 12-2 26-8 27-16 0-4-2-7-8-9z" fill="url(#markGreen)" />
      </svg>
      <span className="absolute top-[18px] left-10 flex h-[25px] w-[62px] items-center justify-center gap-1 rounded-[5px] border border-[#8a8a8a] bg-white text-[13px] text-[#333] shadow-[0_1px_3px_rgba(0,0,0,0.5)]">
        CH
        <Svg w={11} h={13} stroke="#333">
          <path d="M5 1c5 1 6 8 0 10.500-2 .8-3.500.5-4.500-.5C5 10.500 7 6 5 1z" />
        </Svg>
        简
      </span>
      <div className="relative [font-family:'Noto_Sans_CJK_SC',sans-serif]">
        <p className="text-[21px] leading-6 font-bold text-[#3a86d0] opacity-80">极光下载站</p>
        <p className="text-lg leading-[22px] text-[#3fc070] opacity-70 [font-family:'Liberation_Sans',sans-serif]">www.xz7.com</p>
      </div>
    </div>
  );
}

export default function App() {
  return (
    <div className="relative flex h-screen flex-col overflow-hidden bg-[#f5f6f8] [font-family:'Open_Sans','Noto_Sans_CJK_SC',sans-serif]">
      <TitleBar />
      <MenuRow />
      <Ribbon />
      <main className="flex min-h-0 flex-1">
        <div className="flex min-w-0 flex-1 flex-col">
          <FormulaBar />
          <div className="flex min-h-0 flex-1">
            <div className="relative min-w-0 flex-1 overflow-hidden">
              <Sheet />
              <RangeOutlines />
              <HiddenColumns className="left-[125px]" />
              <HiddenColumns className="left-[416px]" />
              <Chart />
              <ChartTools />
            </div>
            <VerticalScroll />
          </div>
          <SheetTabs />
        </div>
        <PropertyPanel />
        <SideBar />
      </main>
      <StatusBar />
      <div className="flex h-[3px] shrink-0 bg-[#1c3040]">
        <span className="ml-[904px] w-40 bg-[#4a5a66]" />
      </div>
      <Pointers />
      <SiteMark />
    </div>
  );
}
